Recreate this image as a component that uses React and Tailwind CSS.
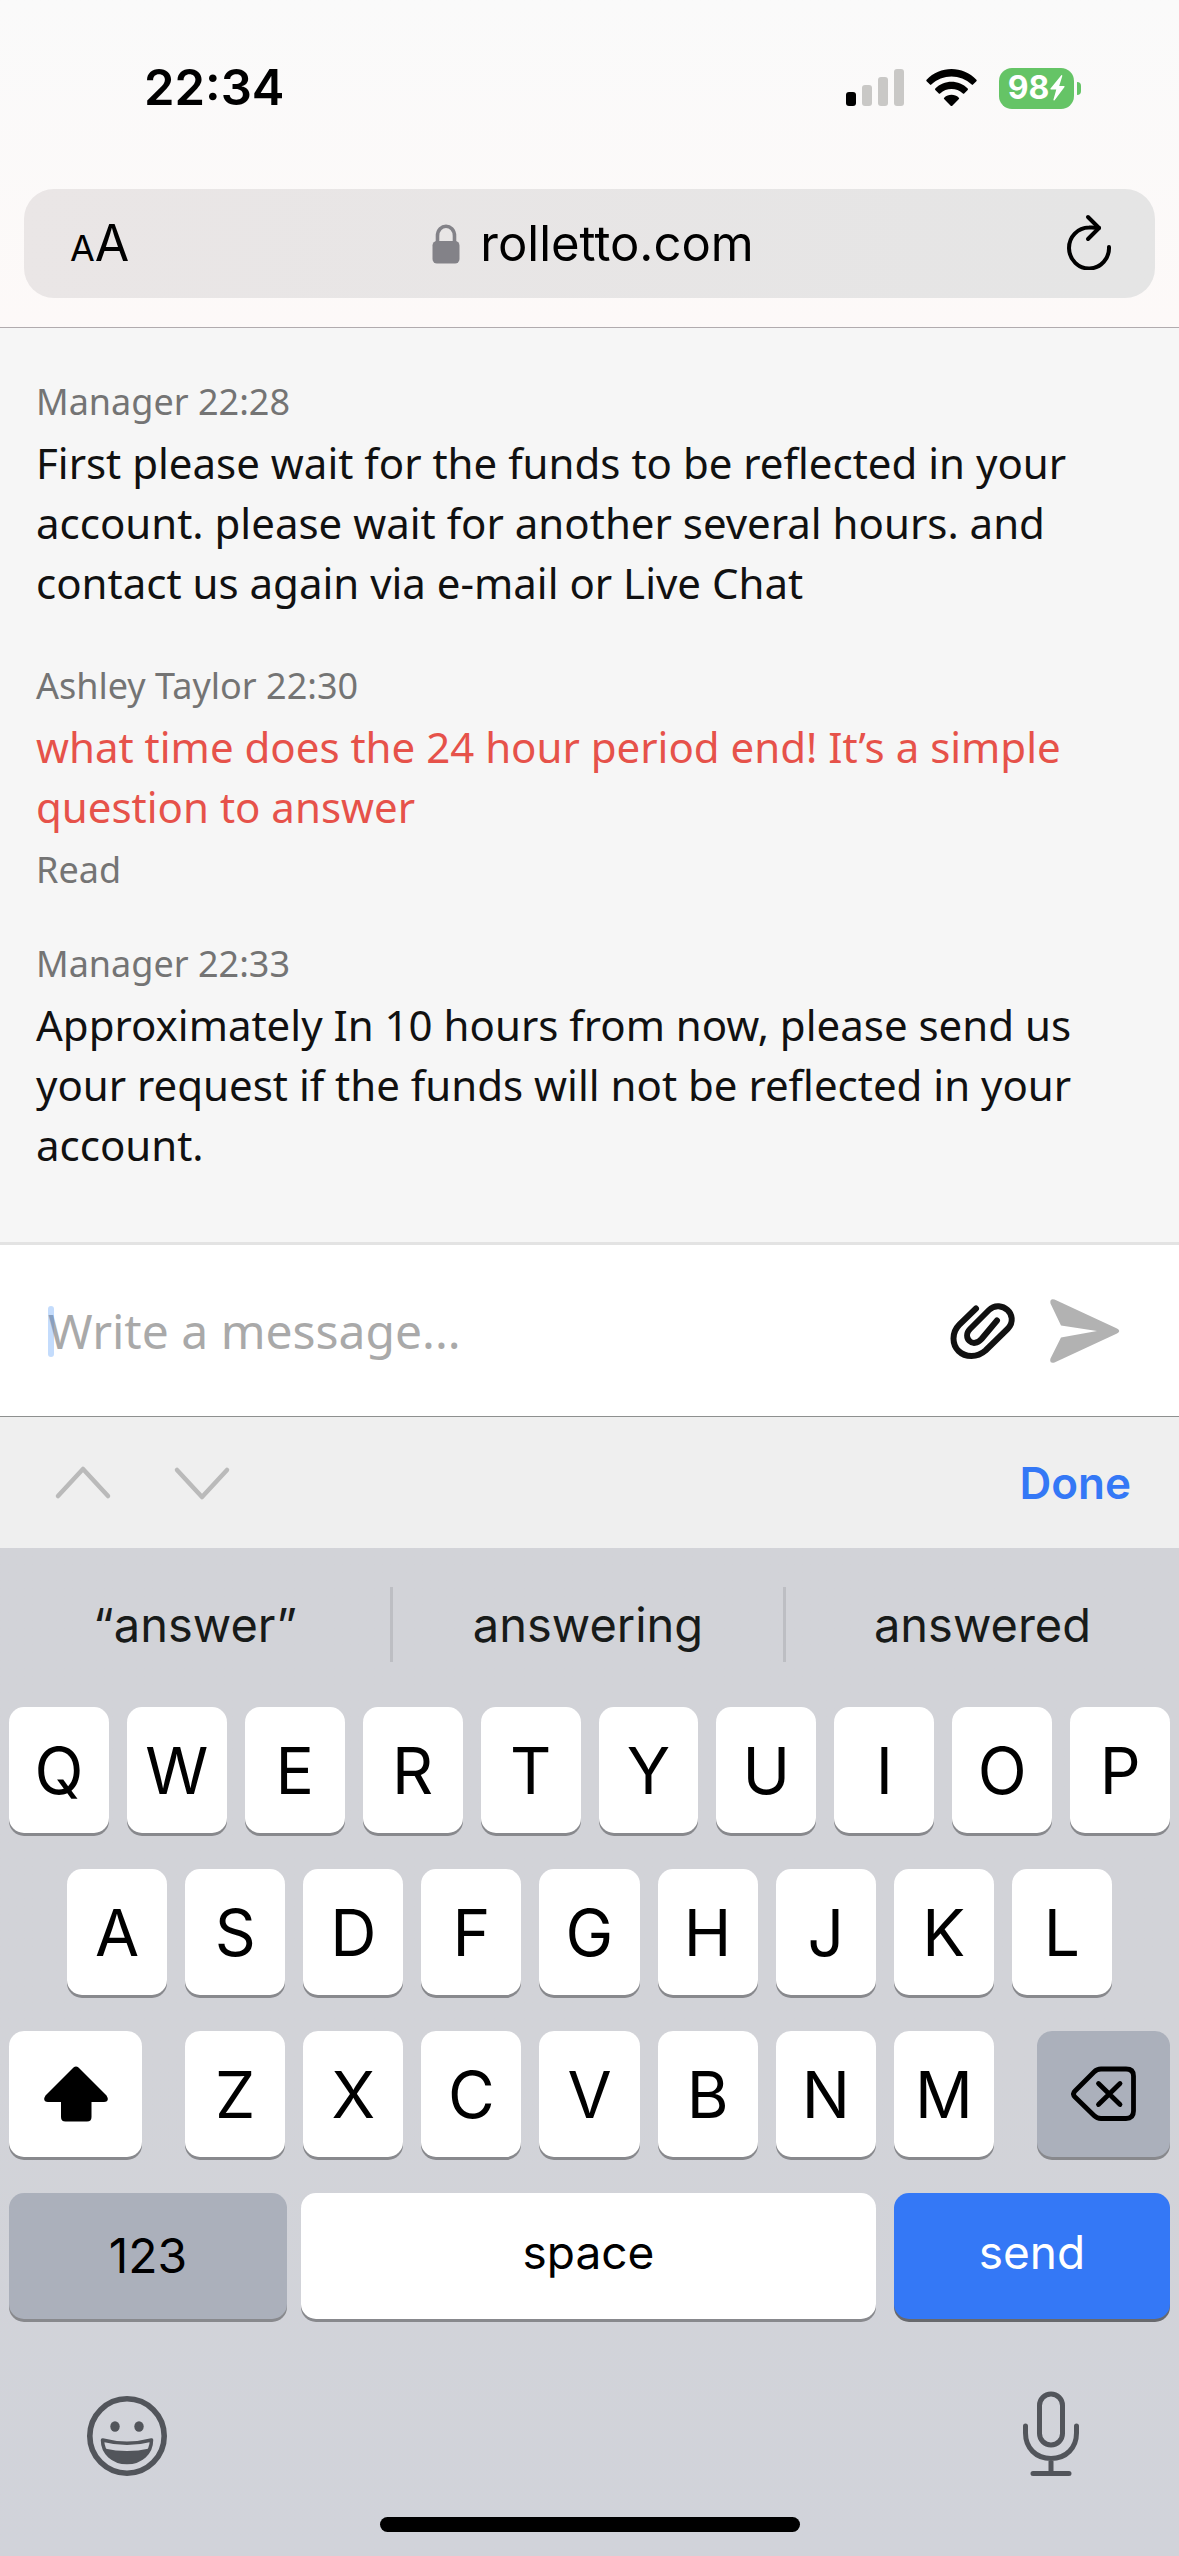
import React, { useState } from 'react';

const messages = [
    {
        id: 1,
        author: 'Manager',
        time: '22:28',
        text: 'First please wait for the funds to be reflected in your account. please wait for another several hours. and contact us again via e-mail or Live Chat',
    },
    {
        id: 2,
        author: 'Ashley Taylor',
        time: '22:30',
        text: 'what time does the 24 hour period end! It’s a simple question to answer',
        own: true,
        read: true,
    },
    {
        id: 3,
        author: 'Manager',
        time: '22:33',
        text: 'Approximately In 10 hours from now, please send us your request if the funds will not be reflected in your account.',
    },
];

const suggestions = ['“answer”', 'answering', 'answered'];

function StatusBar() {
    return (
        <div className="flex items-center justify-between pt-[58px] pr-[98px] pl-36">
            <span className="text-[49px] leading-[60px] font-semibold">22:34</span>
            <div className="flex items-center gap-[22px]">
                <svg width="58" height="38" viewBox="0 0 58 38" aria-label="Signal">
                    <rect x="0" y="23" width="10" height="14" rx="3" fill="#000" />
                    <rect x="16" y="16" width="10" height="21" rx="3" fill="#c9c8c6" />
                    <rect x="32" y="8" width="10" height="29" rx="3" fill="#c9c8c6" />
                    <rect x="48" y="0" width="10" height="37" rx="3" fill="#c9c8c6" />
                </svg>
                <svg width="51" height="38" viewBox="0 0 51 38" aria-label="Wi-Fi">
                    <path d="M0.6 10.8C14 -3.6 37 -3.6 50.4 10.8Q51 11.5 50.4 12.2L47 15.6Q46.4 16.2 45.7 15.6C34.5 4.8 16.5 4.8 5.3 15.6Q4.6 16.2 4 15.6L0.6 12.2Q0 11.5 0.6 10.8Z" />
                    <path d="M9.3 19.6C18 10.6 33 10.6 41.7 19.6Q42.3 20.3 41.7 21L38.2 24.5Q37.6 25.1 36.9 24.5C30.5 18.6 20.5 18.6 14.1 24.5Q13.4 25.1 12.8 24.5L9.3 21Q8.7 20.3 9.3 19.6Z" />
                    <path d="M18.2 28.7C22.2 24.9 28.8 24.9 32.8 28.7Q33.5 29.4 32.9 30.1L26.3 36.7Q25.5 37.4 24.7 36.7L18.1 30.1Q17.5 29.4 18.2 28.7Z" />
                </svg>
                <div className="flex items-center gap-[3px]">
                    <div className="flex h-[41px] w-[75px] items-center justify-center gap-px rounded-[13px] bg-[#65c466] text-white">
                        <span className="text-[32px] leading-none font-bold">98</span>
                        <svg width="15" height="26" viewBox="0 0 15 26" fill="currentColor">
                            <path d="M11.3 0.3L0.5 13.5Q0 14.6 1 14.6H6.3L3.4 24.8Q3.5 26 4.6 25.3L14.5 12Q15 10.9 14 10.9H9.2L12.3 1Q12.2 -0.4 11.3 0.3Z" />
                        </svg>
                    </div>
                    <div className="h-[13px] w-[4px] rounded-r-full bg-[#65c466]" />
                </div>
            </div>
        </div>
    );
}

function AddressBar() {
    return (
        <div className="mx-6 flex h-[109px] items-center justify-between rounded-[30px] bg-linear-to-r from-[#eae6e6] to-[#e5e5e5] pr-[43px] pl-[46px]">
            <button type="button" aria-label="Page settings" className="flex w-[68px] items-baseline pt-1">
                <span className="text-[36px] leading-[60px]">A</span>
                <span className="text-[50px] leading-[60px]">A</span>
            </button>
            <a href="#" className="flex items-center gap-5">
                <svg width="28" height="40" viewBox="0 0 28 40">
                    <path d="M5.5 19V12C5.5 -1 22.5 -1 22.5 12V19" fill="none" stroke="#838288" strokeWidth="3.6" />
                    <rect x="0.5" y="17" width="27" height="22.5" rx="4.5" fill="#838288" />
                </svg>
                <span className="text-[49px] leading-[60px]">rolletto.com</span>
            </a>
            <button type="button" aria-label="Reload" className="flex w-16 justify-end pb-1">
                <svg width="46" height="56" viewBox="0 0 46 56" fill="none" stroke="#000" strokeWidth="4" strokeLinecap="round" strokeLinejoin="round">
                    <path d="M43 33A20 20.5 0 1 1 23 13.5C27 13.3 30 13.5 33 14" />
                    <path d="M22 3L33 14L22 25" />
                </svg>
            </button>
        </div>
    );
}

function Message({ message }) {
    return (
        <article>
            <p className="text-[36px] leading-[54px] text-[#747474]">
                {message.author} {message.time}
            </p>
            <p className={message.own ? 'mt-1 mb-[6px] text-[42px] leading-[60px] text-[#e6524a]' : 'mt-1 mb-[6px] text-[42px] leading-[60px] text-[#111111]'}>
                {message.text}
            </p>
            {message.read && <p className="text-[36px] leading-[54px] text-[#747474]">Read</p>}
        </article>
    );
}

function Composer() {
    const [text, setText] = useState('');

    return (
        <form
            onSubmit={e => e.preventDefault()}
            className="flex h-[174px] items-center border-t-3 border-[#e3e3e3] bg-white pr-[59px] pl-12 font-['Noto_Sans',sans-serif]"
        >
            <div className="relative flex-1">
                <input
                    type="text"
                    aria-label="Message"
                    placeholder="Write a message..."
                    value={text}
                    onChange={e => setText(e.target.value)}
                    className="w-full text-[48px] leading-[66px] text-[#111111] placeholder-[#a9a9a9] outline-none"
                />
                {/* caret */}
                <span className="absolute top-2 left-0 h-[51px] w-[6px] rounded-full bg-[#3b8cf5]/30" />
            </div>
            <div className="flex items-center gap-[34px]">
                <button type="button" aria-label="Attach file">
                    <svg width="66" height="58" viewBox="0 0 66 58" fill="none" stroke="#111" strokeWidth="6" strokeLinecap="round" strokeLinejoin="round">
                        <path d="M26 6.5L9.5 22.5C5.5 26.5 3.5 31 3.5 36.5C3.5 46.5 11 54 21.5 54C27 54 31.5 52 35.5 48.5L58 26.5C64 20 62 12 57.5 8S45 2 39 8L20 27C16 31 16.5 36 19.5 39S27.5 41.5 31.5 37L47 18.5" />
                    </svg>
                </button>
                <button type="submit" aria-label="Send message">
                    <svg width="70" height="64" viewBox="0 0 70 64" fill="#b2b2b2">
                        <path d="M4.5 0.5L67 29.5Q71.5 32 67 34.5L4.5 63.5Q-1 65 0.5 59.5L11 38.5L47 32L11 26.5L0.5 4.5Q-0.5 -1 4.5 0.5Z" />
                    </svg>
                </button>
            </div>
        </form>
    );
}

function FormToolbar() {
    return (
        <div className="flex h-[132px] items-center justify-between border-t border-[#8e908f] bg-[#efefef] pr-12 pl-[54px]">
            <div className="flex gap-[61px] text-[#bababa]">
                <button type="button" aria-label="Previous field">
                    <svg width="58" height="36" viewBox="0 0 58 36" fill="none" stroke="currentColor" strokeWidth="4.5" strokeLinecap="round" strokeLinejoin="round">
                        <path d="M4 31L29 4L54 31" />
                    </svg>
                </button>
                <button type="button" aria-label="Next field">
                    <svg width="58" height="36" viewBox="0 0 58 36" fill="none" stroke="currentColor" strokeWidth="4.5" strokeLinecap="round" strokeLinejoin="round">
                        <path d="M4 5L29 32L54 5" />
                    </svg>
                </button>
            </div>
            <button type="button" className="text-[44px] leading-[60px] font-semibold text-[#3478f6]">
                Done
            </button>
        </div>
    );
}

function LetterKey({ letter }) {
    return (
        <button type="button" className="h-[126px] min-w-0 flex-1 rounded-[15px] bg-white pt-[2px] text-[64px] leading-none shadow-[0_3px_0_#88898d]">
            {letter}
        </button>
    );
}

function Keyboard() {
    return (
        <div className="bg-linear-to-b from-[#d2d3d8] via-[#d2d3d8] to-[#d1d3da] pb-6">
            <div className="grid h-[159px] grid-cols-3 pt-[39px]">
                {suggestions.map((word, i) => (
                    <button
                        key={word}
                        type="button"
                        className={i === suggestions.length - 1 ? 'h-[75px] text-[47px] leading-[60px] text-[#181b1a]' : 'h-[75px] border-r-3 border-[#bdbec3] text-[47px] leading-[60px] text-[#181b1a]'}
                    >
                        {word}
                    </button>
                ))}
            </div>

            <div className="flex flex-col gap-9 px-[9px]">
                <div className="flex gap-[18px]">
                    {'QWERTYUIOP'.split('').map(l => <LetterKey key={l} letter={l} />)}
                </div>
                <div className="flex gap-[18px] px-[5%]">
                    {'ASDFGHJKL'.split('').map(l => <LetterKey key={l} letter={l} />)}
                </div>
                <div className="flex gap-[43px]">
                    <button type="button" aria-label="Shift" className="flex h-[126px] w-[133px] items-center justify-center rounded-[15px] bg-white shadow-[0_3px_0_#88898d]">
                        <svg width="64" height="56" viewBox="0 0 64 56">
                            <path d="M29.5 1.5Q32 -0.5 34.5 1.5L62.5 29.5Q66 35.5 60 36H47.5V51Q47.5 55.5 43 55.5H21.5Q17 55.5 17 51V36H4Q-2 35.5 1.5 29.5Z" />
                        </svg>
                    </button>
                    <div className="flex flex-1 gap-[18px]">
                        {'ZXCVBNM'.split('').map(l => <LetterKey key={l} letter={l} />)}
                    </div>
                    <button type="button" aria-label="Delete" className="flex h-[126px] w-[133px] items-center justify-center rounded-[15px] bg-[#abb0bb] shadow-[0_3px_0_#88898d]">
                        <svg width="66" height="56" viewBox="0 0 66 56" fill="none" stroke="#000" strokeWidth="4.8" strokeLinecap="round" strokeLinejoin="round">
                            <path d="M30 3H55Q62.5 3 62.5 10V45Q62.5 52.5 55 52.5H30Q26 52.5 23 49.5L4 31Q1 28 4 25L23 6Q26 3 30 3Z" />
                            <path d="M27.5 17.5L49 38.5M49 17.5L27.5 38.5" />
                        </svg>
                    </button>
                </div>
                <div className="flex text-[46px] leading-[60px]">
                    <button type="button" className="h-[126px] w-[278px] rounded-[15px] bg-[#abb0bb] text-[48px] shadow-[0_3px_0_#88898d]">123</button>
                    <button type="button" className="mr-[18px] ml-[14px] h-[126px] flex-1 rounded-[15px] bg-white pb-2 shadow-[0_3px_0_#88898d]">space</button>
                    <button type="button" className="h-[126px] w-[276px] rounded-[15px] bg-[#3478f6] pb-2 text-white shadow-[0_3px_0_#68696d]">send</button>
                </div>
            </div>

            <div className="flex items-end justify-between px-[86px] pt-[72px] pb-10 text-[#52555b]">
                <button type="button" aria-label="Emoji">
                    <svg width="82" height="82" viewBox="0 0 82 82" fill="none" stroke="currentColor">
                        <circle cx="41" cy="41" r="37.2" strokeWidth="5.6" />
                        <ellipse cx="29" cy="31.5" rx="4.7" ry="5.3" fill="currentColor" stroke="none" />
                        <ellipse cx="53" cy="31.5" rx="4.7" ry="5.3" fill="currentColor" stroke="none" />
                        <path d="M16.5 45Q41 51.5 65.5 45C65.5 58 55 67.5 41 67.5S16.5 58 16.5 45Z" strokeWidth="3.5" strokeLinejoin="round" />
                        <path d="M18.5 53.5Q41 58.5 63.5 53.5C60 63 51.5 67.5 41 67.5S22 63 18.5 53.5Z" fill="currentColor" stroke="none" />
                    </svg>
                </button>
                <button type="button" aria-label="Dictate" className="pr-3">
                    <svg width="60" height="86" viewBox="0 0 60 86" fill="none" stroke="currentColor" strokeWidth="5" strokeLinecap="round">
                        <rect x="18.5" y="3" width="23" height="51" rx="11.5" />
                        <path d="M4.5 35V42C4.5 57 15 67.5 30 67.5S55.5 57 55.5 42V35M30 68V82M12 82.5H48" />
                    </svg>
                </button>
            </div>
            <div className="mx-auto h-[15px] w-[420px] rounded-full bg-black" />
        </div>
    );
}

export default function App() {
    return (
        <div className="flex min-h-screen flex-col bg-[#f6f6f6] font-['Inter',sans-serif] text-black">
            <header className="flex flex-col gap-[71px] border-b border-[#b1abae] bg-linear-to-b from-[#fafafa] to-[#fdf9f8] pb-[29px]">
                <StatusBar />
                <AddressBar />
            </header>
            <main className="flex flex-1 flex-col gap-10 px-9 pt-[47px] font-['Noto_Sans',sans-serif]">
                {messages.map(m => <Message key={m.id} message={m} />)}
            </main>
            <Composer />
            <FormToolbar />
            <Keyboard />
        </div>
    );
}
